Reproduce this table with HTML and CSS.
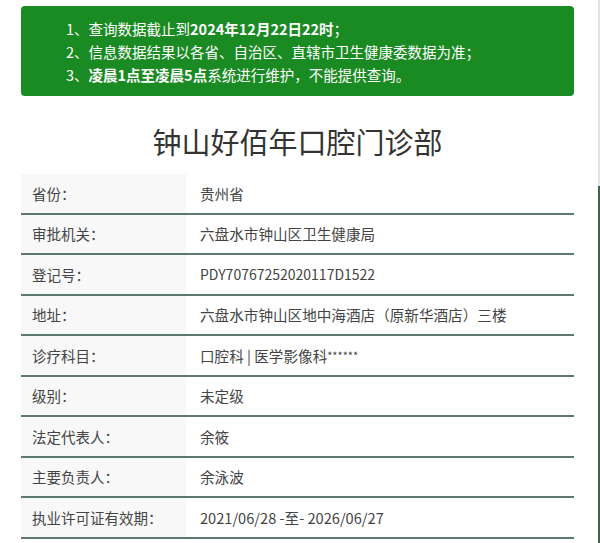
FILE: index.html
```html
<!DOCTYPE html>
<html lang="zh">
<head>
<meta charset="utf-8">
<title>钟山好佰年口腔门诊部</title>
<link rel="stylesheet" href="styles.css">
</head>
<body>
<div class="page">
  <div class="main">
    <div class="notice">
      <p>1、查询数据截止到<b>2024年12月22日22时</b>；</p>
      <p>2、信息数据结果以各省、自治区、直辖市卫生健康委数据为准；</p>
      <p>3、<b>凌晨1点至凌晨5点</b>系统进行维护，不能提供查询。</p>
    </div>
    <h1 class="title">钟山好佰年口腔门诊部</h1>
    <div class="table">
      <div class="row"><div class="label">省份：</div><div class="value">贵州省</div></div>
      <div class="row"><div class="label">审批机关：</div><div class="value">六盘水市钟山区卫生健康局</div></div>
      <div class="row"><div class="label">登记号：</div><div class="value num">PDY70767252020117D1522</div></div>
      <div class="row"><div class="label">地址：</div><div class="value">六盘水市钟山区地中海酒店（原新华酒店）三楼</div></div>
      <div class="row"><div class="label">诊疗科目：</div><div class="value">口腔科 | 医学影像科<span class="stars">******</span></div></div>
      <div class="row"><div class="label">级别：</div><div class="value">未定级</div></div>
      <div class="row"><div class="label">法定代表人：</div><div class="value">余筱</div></div>
      <div class="row"><div class="label">主要负责人：</div><div class="value">余泳波</div></div>
      <div class="row"><div class="label">执业许可证有效期：</div><div class="value">2021/06/28 -至- 2026/06/27</div></div>
    </div>
  </div>
  <div class="edge"></div>
</div>
</body>
</html>
```

FILE: styles.css
```css
html, body {
  margin: 0;
  padding: 0;
  background: #fff;
}
body {
  font-family: "Noto Sans CJK SC", "Noto Sans", sans-serif;
  color: #333;
  overflow: hidden;
}
.page {
  display: flex;
  width: 600px;
  height: 543px;
}
.main {
  width: 553px;
  padding: 6px 23px 0 21px;
}
.edge {
  width: 2px;
  margin-left: 1px;
  background: linear-gradient(to bottom, #e2e2e2 0, #e2e2e2 186px, #46634f 186px, #46634f 100%);
}
.notice {
  background: #1a8a22;
  border-radius: 4px;
  height: 90px;
  box-sizing: border-box;
  padding: 11px 0 0 45px;
  color: #fff;
  font-size: 14.5px;
  line-height: 23px;
}
.notice p {
  margin: 0;
}
.notice b {
  font-weight: 700;
}
.title {
  margin: 23px 0 0;
  text-align: center;
  font-size: 29px;
  font-weight: 400;
  line-height: 44px;
  color: #333;
  height: 55px;
}
.table {
  display: flex;
  flex-direction: column;
}
.row {
  display: flex;
  height: 38.5px;
  border-bottom: 2px solid #5c7a6c;
  color: #444;
}
.label {
  width: 154px;
  padding-left: 11px;
  background: #f8f8f8;
  display: flex;
  align-items: center;
  font-size: 14.5px;
}
.value {
  flex: 1;
  padding-left: 14px;
  display: flex;
  align-items: center;
  font-size: 14.6px;
}
.value.num {
  font-size: 14px;
}
.stars {
  font-size: 11px;
  align-self: flex-start;
  margin-top: 11px;
}
```
